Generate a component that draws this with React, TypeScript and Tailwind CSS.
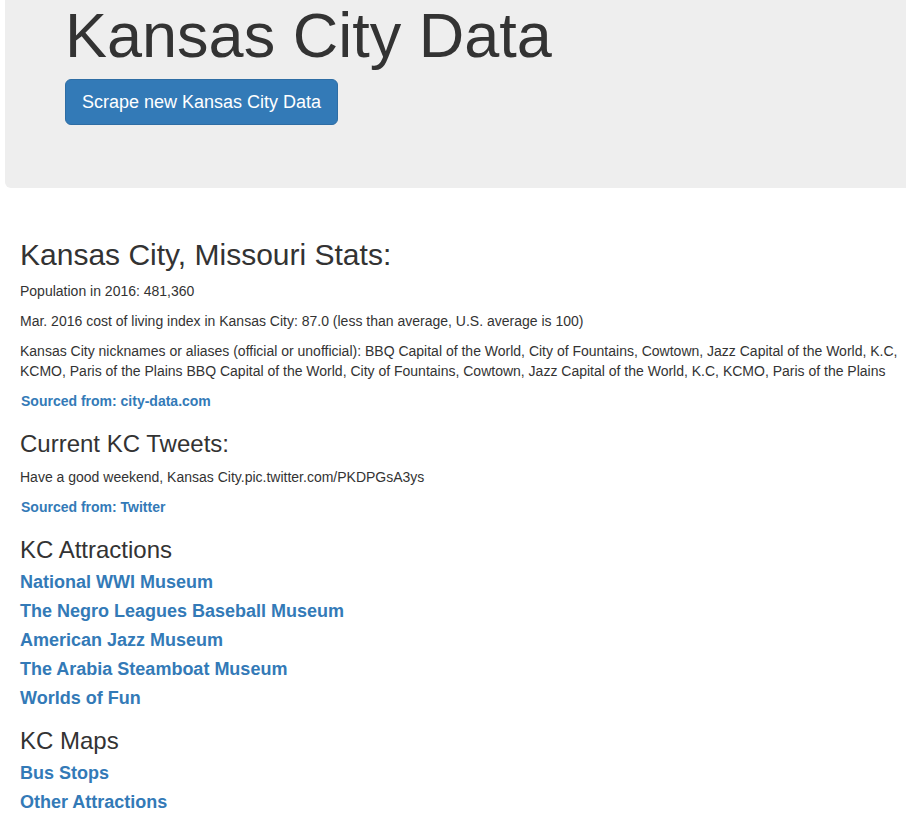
import React from "react";

const attractions = [
  "National WWI Museum",
  "The Negro Leagues Baseball Museum",
  "American Jazz Museum",
  "The Arabia Steamboat Museum",
  "Worlds of Fun",
];

const maps = ["Bus Stops", "Other Attractions"];

export default function App() {
  return (
    <div
      className="min-h-[821px] bg-white text-[#333] overflow-hidden"
      style={{ fontFamily: '"Liberation Sans", Arial, Helvetica, sans-serif' }}
    >
      <div className="pl-[5px]">
        <div className="bg-[#eeeeee] rounded-bl-[6px] pl-[60px] pt-px pb-[63px]">
          <h1 className="text-[63px] leading-[69px] font-normal m-0">Kansas City Data</h1>
          <button
            type="button"
            className="mt-[9px] bg-[#337ab7] border border-[#2e6da4] text-white text-[18px] leading-[24px] px-[16px] py-[10px] rounded-[6px]"
          >
            Scrape new Kansas City Data
          </button>
        </div>
      </div>

      <div className="pl-[20px] pr-[4px] text-[14px] leading-[20px]">
        <h2 className="text-[30px] leading-[33px] font-normal mt-[50px] mb-[10px]">
          Kansas City, Missouri Stats:
        </h2>
        <p className="mb-[10px]">Population in 2016: 481,360</p>
        <p className="mb-[10px]">
          Mar. 2016 cost of living index in Kansas City: 87.0 (less than average, U.S. average is 100)
        </p>
        <p className="mb-[10px]">
          Kansas City nicknames or aliases (official or unofficial): BBQ Capital of the World, City of
          Fountains, Cowtown, Jazz Capital of the World, K.C, KCMO, Paris of the Plains BBQ Capital of
          the World, City of Fountains, Cowtown, Jazz Capital of the World, K.C, KCMO, Paris of the
          Plains
        </p>
        <p className="mb-[10px] pl-px">
          <a href="#" className="text-[#337ab7] font-bold text-[14px]">
            Sourced from: city-data.com
          </a>
        </p>

        <h3 className="text-[24px] leading-[26px] font-normal mt-[20px] mb-[10px]">Current KC Tweets:</h3>
        <p className="mb-[10px]">Have a good weekend, Kansas City.pic.twitter.com/PKDPGsA3ys</p>
        <p className="mb-[10px] pl-px">
          <a href="#" className="text-[#337ab7] font-bold text-[14px]">
            Sourced from: Twitter
          </a>
        </p>

        <h3 className="text-[24px] leading-[26px] font-normal mt-[20px] mb-[5px]">KC Attractions</h3>
        <div className="flex flex-col">
          {attractions.map((a) => (
            <a key={a} href="#" className="text-[#337ab7] font-bold text-[18px] leading-[29px] self-start">
              {a}
            </a>
          ))}
        </div>

        <h3 className="text-[24px] leading-[26px] font-normal mt-[15px] mb-[5px]">KC Maps</h3>
        <div className="flex flex-col">
          {maps.map((a) => (
            <a key={a} href="#" className="text-[#337ab7] font-bold text-[18px] leading-[29px] self-start">
              {a}
            </a>
          ))}
        </div>
      </div>
    </div>
  );
}
